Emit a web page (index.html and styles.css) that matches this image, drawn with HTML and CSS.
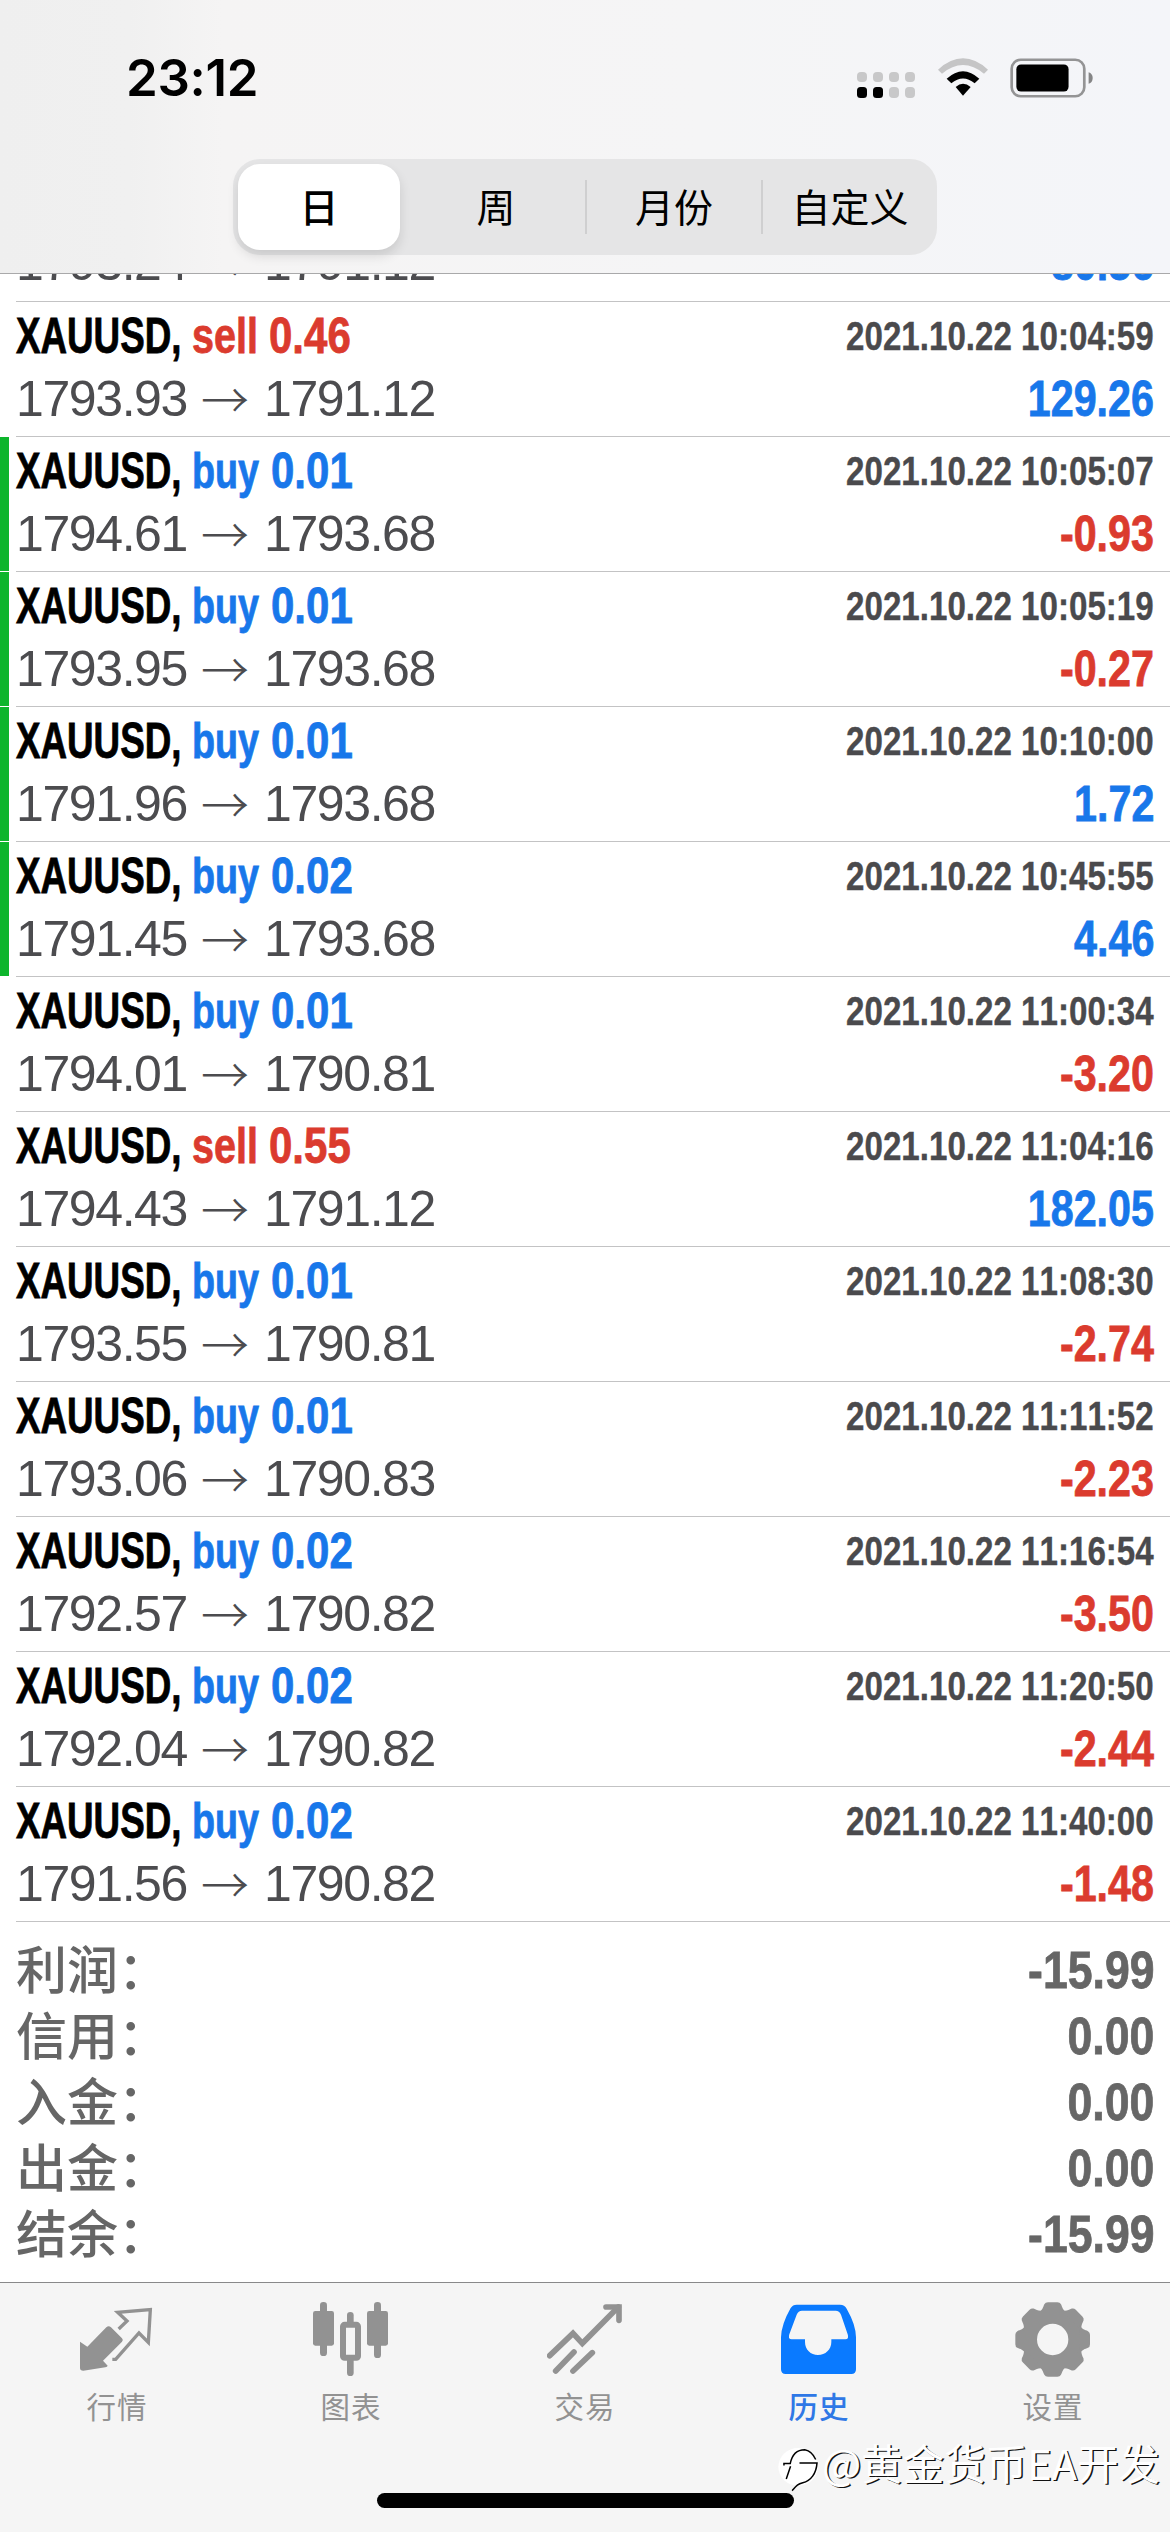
FILE: index.html
```html
<!DOCTYPE html>
<html lang="zh-CN">
<head>
<meta charset="utf-8">
<title>历史</title>
<link rel="stylesheet" href="styles.css">
</head>
<body>
<div class="screen">
  <header class="header">
    <div class="status">
      <span class="time">23:12</span>
      <div class="status-icons">
        <svg class="signal" viewBox="0 0 58 27"><g fill="#c8c8c9"><rect x="0" y="0" width="10" height="10" rx="4"/><rect x="16" y="0" width="10" height="10" rx="4"/><rect x="32" y="0" width="10" height="10" rx="4"/><rect x="48" y="0" width="10" height="10" rx="4"/><rect x="32" y="15" width="10" height="11" rx="4"/><rect x="48" y="15" width="10" height="11" rx="4"/></g><rect x="0" y="15" width="10" height="11" rx="3.5"/><rect x="16" y="15" width="10" height="11" rx="3.5"/></svg>
        <svg class="wifi" viewBox="349 85 150 114"><path d="M349 120Q424 52 499 120L487 132Q424 80 361 132Z" fill="#c5c5c6"/><path d="M375 147Q424 102 473 147L459 161Q424 132 389 161Z"/><path d="M402 172Q424 152 447 172L424 198Z"/></svg>
        <svg class="battery" viewBox="566 83 248 119"><rect x="571" y="88" width="217" height="109" rx="27" fill="none" stroke="#949495" stroke-width="8"/><rect x="585" y="102" width="156" height="81" rx="14"/><path d="M801 125Q813 129 813 142.500Q813 156 801 160Z" fill="#858586"/></svg>
      </div>
    </div>
    <nav class="segments">
      <span class="segment selected">日</span><span class="segment">周</span><span class="segment divided">月份</span><span class="segment divided">自定义</span>
    </nav>
  </header>

  <main class="list">
    <div class="row first"><div class="line"><span class="open">1793.24</span><span class="arrow">→</span><span class="close">1791.12</span><b class="value up">80.56</b></div></div>
    <div class="row"><div class="line"><b class="sym">XAUUSD,</b><b class="verb sell">sell</b><b class="qty sell">0.46</b><b class="date">2021.10.22 10:04:59</b></div><div class="line"><span class="open">1793.93</span><span class="arrow">→</span><span class="close">1791.12</span><b class="value up">129.26</b></div></div>
    <div class="row marked"><div class="line"><b class="sym">XAUUSD,</b><b class="verb buy">buy</b><b class="qty buy">0.01</b><b class="date">2021.10.22 10:05:07</b></div><div class="line"><span class="open">1794.61</span><span class="arrow">→</span><span class="close">1793.68</span><b class="value down">-0.93</b></div></div>
    <div class="row marked"><div class="line"><b class="sym">XAUUSD,</b><b class="verb buy">buy</b><b class="qty buy">0.01</b><b class="date">2021.10.22 10:05:19</b></div><div class="line"><span class="open">1793.95</span><span class="arrow">→</span><span class="close">1793.68</span><b class="value down">-0.27</b></div></div>
    <div class="row marked"><div class="line"><b class="sym">XAUUSD,</b><b class="verb buy">buy</b><b class="qty buy">0.01</b><b class="date">2021.10.22 10:10:00</b></div><div class="line"><span class="open">1791.96</span><span class="arrow">→</span><span class="close">1793.68</span><b class="value up">1.72</b></div></div>
    <div class="row marked"><div class="line"><b class="sym">XAUUSD,</b><b class="verb buy">buy</b><b class="qty buy">0.02</b><b class="date">2021.10.22 10:45:55</b></div><div class="line"><span class="open">1791.45</span><span class="arrow">→</span><span class="close">1793.68</span><b class="value up">4.46</b></div></div>
    <div class="row"><div class="line"><b class="sym">XAUUSD,</b><b class="verb buy">buy</b><b class="qty buy">0.01</b><b class="date">2021.10.22 11:00:34</b></div><div class="line"><span class="open">1794.01</span><span class="arrow">→</span><span class="close">1790.81</span><b class="value down">-3.20</b></div></div>
    <div class="row"><div class="line"><b class="sym">XAUUSD,</b><b class="verb sell">sell</b><b class="qty sell">0.55</b><b class="date">2021.10.22 11:04:16</b></div><div class="line"><span class="open">1794.43</span><span class="arrow">→</span><span class="close">1791.12</span><b class="value up">182.05</b></div></div>
    <div class="row"><div class="line"><b class="sym">XAUUSD,</b><b class="verb buy">buy</b><b class="qty buy">0.01</b><b class="date">2021.10.22 11:08:30</b></div><div class="line"><span class="open">1793.55</span><span class="arrow">→</span><span class="close">1790.81</span><b class="value down">-2.74</b></div></div>
    <div class="row"><div class="line"><b class="sym">XAUUSD,</b><b class="verb buy">buy</b><b class="qty buy">0.01</b><b class="date">2021.10.22 11:11:52</b></div><div class="line"><span class="open">1793.06</span><span class="arrow">→</span><span class="close">1790.83</span><b class="value down">-2.23</b></div></div>
    <div class="row"><div class="line"><b class="sym">XAUUSD,</b><b class="verb buy">buy</b><b class="qty buy">0.02</b><b class="date">2021.10.22 11:16:54</b></div><div class="line"><span class="open">1792.57</span><span class="arrow">→</span><span class="close">1790.82</span><b class="value down">-3.50</b></div></div>
    <div class="row"><div class="line"><b class="sym">XAUUSD,</b><b class="verb buy">buy</b><b class="qty buy">0.02</b><b class="date">2021.10.22 11:20:50</b></div><div class="line"><span class="open">1792.04</span><span class="arrow">→</span><span class="close">1790.82</span><b class="value down">-2.44</b></div></div>
    <div class="row"><div class="line"><b class="sym">XAUUSD,</b><b class="verb buy">buy</b><b class="qty buy">0.02</b><b class="date">2021.10.22 11:40:00</b></div><div class="line"><span class="open">1791.56</span><span class="arrow">→</span><span class="close">1790.82</span><b class="value down">-1.48</b></div></div>

    <div class="summary">
      <div class="total"><span class="label">利润：</span><b class="amount">-15.99</b></div>
      <div class="total"><span class="label">信用：</span><b class="amount">0.00</b></div>
      <div class="total"><span class="label">入金：</span><b class="amount">0.00</b></div>
      <div class="total"><span class="label">出金：</span><b class="amount">0.00</b></div>
      <div class="total"><span class="label">结余：</span><b class="amount">-15.99</b></div>
    </div>
  </main>

  <footer class="tabbar">
    <div class="tab"><svg viewBox="237 93 228 228"><path d="M240 215L262 230L319 172Q326 165 333 172L366 205Q371 210 366 215L309 272L323 287Q322 291 316 292L250 302Q240 302 240 294Z" fill="#929292"/><path d="M356 177L381 153L353 127L451 119L445 217L417 189L347 268H337" fill="none" stroke="#929292" stroke-width="10"/></svg><span>行情</span></div>
    <div class="tab"><svg viewBox="939 93 228 228" fill="#929292"><rect x="939" y="123" width="63" height="104" rx="7"/><rect x="960" y="96" width="21" height="162" rx="10"/><rect x="1101" y="123" width="63" height="104" rx="7"/><rect x="1122" y="96" width="21" height="168" rx="10"/><rect x="1041" y="126" width="20" height="40" rx="10"/><rect x="1041" y="262" width="20" height="56" rx="10"/><rect x="1029" y="164.500" width="45" height="99" rx="5" fill="none" stroke="#929292" stroke-width="18"/></svg><span>图表</span></div>
    <div class="tab"><svg viewBox="441 93 228 228" fill="none" stroke="#929292" stroke-width="17" stroke-linecap="round"><path d="M449 257L519 190L547 220L655 111"/><path d="M618 111H657V151"/><path d="M467 303L522 246M519 303L577 248"/></svg><span>交易</span></div>
    <div class="tab active"><svg viewBox="93 93 228 228"><path fill="#0a7aff" fill-rule="evenodd" d="M140 104H270Q284 104 290 116Q318 165 318 202V298Q318 312 304 312H107Q93 312 93 298V202Q94 163 122 114Q128 104 140 104ZM156 122Q145 122 140 134L118 193Q113 208 125 208H165V216C165 239 182 255 204 255S244 239 244 216V208H286Q298 208 293 193L273 134Q268 122 257 122Z"/></svg><span>历史</span></div>
    <div class="tab"><svg viewBox="795 93 228 228"><defs><path id="tooth" d="M-44-80C-30-88-29-97-25-106Q-22-112-14-112H14Q22-112 25-106C29-97 30-88 44-80Z"/></defs><g transform="translate(908 208.500)" fill="#929292"><circle r="68" fill="none" stroke="#929292" stroke-width="42"/><use href="#tooth"/><use href="#tooth" transform="rotate(45)"/><use href="#tooth" transform="rotate(90)"/><use href="#tooth" transform="rotate(135)"/><use href="#tooth" transform="rotate(180)"/><use href="#tooth" transform="rotate(225)"/><use href="#tooth" transform="rotate(270)"/><use href="#tooth" transform="rotate(315)"/></g></svg><span>设置</span></div>
  </footer>
  <div class="home"></div>
  <div class="credit">
    <svg viewBox="20 50 130 140"><ellipse cx="84" cy="112" rx="60" ry="57" fill="#fff"/><path d="M41 108V102H60C66 72 84 60 104 60Q126 64 137 90M88 100H141C139 132 122 155 98 160C82 164 78 170 66 184M61 110L48 149" fill="none" stroke="#000" stroke-width="4.500"/></svg><span>@黄金货币EA开发</span>
  </div>
</div>
</body>
</html>
```
FILE: styles.css
```css
* { box-sizing: border-box; }
body { margin: 0; background: #fff; }
.screen {
  position: relative;
  width: 1170px;
  height: 2532px;
  overflow: hidden;
  display: flex;
  flex-direction: column;
  font-family: "Liberation Sans", "Noto Sans CJK SC", sans-serif;
  font-kerning: none;
  color: #000;
}

/* Header */
.header {
  flex: none;
  height: 274px;
  border-bottom: 1px solid #a9a9aa;
  background: linear-gradient(90deg, #efefef 0%, #f0f0f0 11%, #f5f4f4 19%, #f5f5f6 60%, #f4f5f9 100%);
}
.status {
  height: 159px;
  padding: 0 77px 0 126px;
  display: flex;
  justify-content: space-between;
}
.time {
  font: 600 51px/62px Inter, sans-serif;
  font-kerning: normal;
  letter-spacing: -0.3px;
  margin-top: 47px;
}
.status-icons { display: flex; }
.status-icons svg { display: block; flex: none; }
.signal { width: 58px; height: 27px; margin: 72px 23px 0 0; }
.wifi { width: 50px; height: 38px; margin: 58px 22px 0 0; }
.battery { width: 83px; height: 40px; margin-top: 58px; }

.segments {
  width: 704px;
  height: 96px;
  margin: 0 auto;
  padding: 5px 0;
  display: grid;
  grid-template-columns: 172px 180px 176px 176px;
  border-radius: 27px;
  background: #e5e5e6;
}
.segment {
  display: flex;
  align-items: center;
  justify-content: center;
  padding: 0 0 4px 2px;
  font: 400 39px/1 "Noto Sans CJK SC", sans-serif;
}
.segment.selected {
  width: 162px;
  margin-left: 5px;
  padding-left: 0;
  border-radius: 22px;
  background: #fff;
  font-weight: 500;
  box-shadow: 0 6px 12px rgba(0, 0, 0, .12);
}
.segment.divided {
  background: linear-gradient(#cfcfd0, #cfcfd0) 0 50% / 2px 54px no-repeat;
}

/* Deals */
.list { flex: 1; overflow: hidden; }
.row {
  height: 135px;
  padding: 3px 16px 0;
  background: linear-gradient(#c3c3c4, #c3c3c4) 16px 134px / 1154px 1px no-repeat;
}
.row.first {
  height: 28px;
  padding: 0 16px 7px;
  display: flex;
  flex-direction: column;
  justify-content: flex-end;
  background-position: 16px 27px;
}
.row.marked {
  background:
    linear-gradient(#0db52c, #0db52c) 0 0 / 9px 134px no-repeat,
    linear-gradient(#c3c3c4, #c3c3c4) 16px 134px / 1154px 1px no-repeat;
}
.line {
  flex: none;
  height: 63px;
  display: flex;
  align-items: center;
  font-size: 50px;
  line-height: 63px;
  white-space: nowrap;
}
.line b { flex: none; -webkit-text-stroke: .8px currentColor; }
.sym, .verb, .qty { transform-origin: 0 50%; }
.sym { width: 176px; transform: scaleX(.735); }
.verb.sell { width: 77px; transform: scaleX(.79); }
.verb.buy { width: 79px; transform: scaleX(.755); }
.qty { width: 90px; transform: scaleX(.84); }
.sell, .down { color: #db3b2e; }
.buy, .up { color: #1877ea; }
.date, .value, .amount {
  margin-left: auto;
  transform-origin: 100% 50%;
}
.line .date { font-size: 41px; transform: scaleX(.808); color: #4a4a4d; -webkit-text-stroke-width: .4px; }
.value { transform: scaleX(.825); }
.open, .close { letter-spacing: -1.4px; color: #4c4c4f; }
.open { width: 185px; }
.arrow {
  width: 63px;
  height: 63px;
  font: 300 48px/59px "Noto Sans CJK SC", sans-serif;
  color: #4c4c4f;
}

/* Totals */
.summary { padding: 15px 16px 0; color: #666; }
.total {
  height: 66px;
  display: flex;
  align-items: center;
}
.label {
  height: 66px;
  font: 500 51px/61px "Noto Sans CJK SC", sans-serif;
}
.amount {
  font: 700 52px/66px "Liberation Sans", sans-serif;
  transform: scaleX(.857);
  -webkit-text-stroke: .8px currentColor;
}

/* Tab bar */
.tabbar {
  flex: none;
  height: 250px;
  border-top: 1px solid #89898a;
  background: #f5f5f5;
  display: grid;
  grid-template-columns: repeat(5, 1fr);
}
.tab {
  display: flex;
  flex-direction: column;
  align-items: center;
  padding-top: 18px;
  font: 400 29.500px/40px "Noto Sans CJK SC", sans-serif;
  letter-spacing: 1px;
  color: #929292;
}
.tab svg { width: 76px; height: 76px; margin-bottom: 8px; }
.tab.active { color: #2f78e6; font-weight: 500; }
.home {
  position: absolute;
  left: 377px;
  top: 2493px;
  width: 417px;
  height: 15px;
  border-radius: 8px;
  background: #000;
}
.credit {
  position: absolute;
  left: 777px;
  top: 2432px;
  display: flex;
  font: 400 41.500px/60px "Noto Sans CJK SC", sans-serif;
  color: #fff;
  text-shadow: 1.500px 1px 0 #111;
  white-space: nowrap;
}
.credit svg { width: 43px; height: 47px; margin: 14px 2px 0 0; }
```
